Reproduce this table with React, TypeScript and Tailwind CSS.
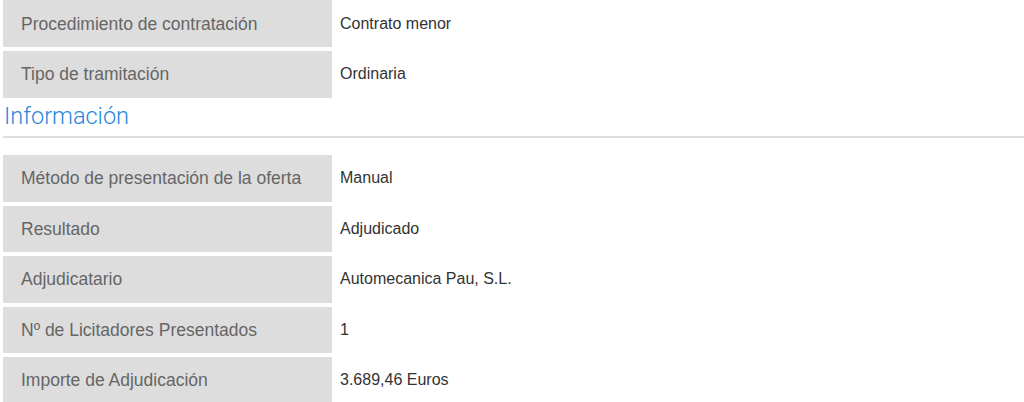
const contratacion = [
  { label: 'Procedimiento de contratación', value: 'Contrato menor' },
  { label: 'Tipo de tramitación', value: 'Ordinaria' },
];

const informacion = [
  { label: 'Método de presentación de la oferta', value: 'Manual' },
  { label: 'Resultado', value: 'Adjudicado' },
  { label: 'Adjudicatario', value: 'Automecanica Pau, S.L.' },
  { label: 'Nº de Licitadores Presentados', value: '1' },
  { label: 'Importe de Adjudicación', value: '3.689,46 Euros' },
];

function DataTable({ rows }: { rows: { label: string; value: string }[] }) {
  return (
    <div className="flex flex-col gap-y-[3.7px] pl-[3px]">
      {rows.map((row) => (
        <div key={row.label} className="flex h-[46.8px]">
          <div className="flex w-[329px] shrink-0 items-center bg-[#dddddd] pl-[18px] text-[17.5px] text-[#666666]">
            {row.label}
          </div>
          <div className="flex items-center pl-[8px] text-[16px] text-[#333333]">{row.value}</div>
        </div>
      ))}
    </div>
  );
}

export default function App() {
  return (
    <div className="h-[402px] w-[1024px] overflow-hidden bg-white font-['Liberation_Sans',Arial,sans-serif]">
      <div className="mt-[0.3px]">
        <DataTable rows={contratacion} />
      </div>
      <h2 className="mt-[1px] pl-[4px] font-['Roboto',sans-serif] text-[23.5px] font-light leading-[34px] text-[#2a86dc]">
        Información
      </h2>
      <div className="ml-[3px] mt-[3px] h-[2px] bg-[#dddddd]" />
      <div className="mt-[17.5px]">
        <DataTable rows={informacion} />
      </div>
    </div>
  );
}
